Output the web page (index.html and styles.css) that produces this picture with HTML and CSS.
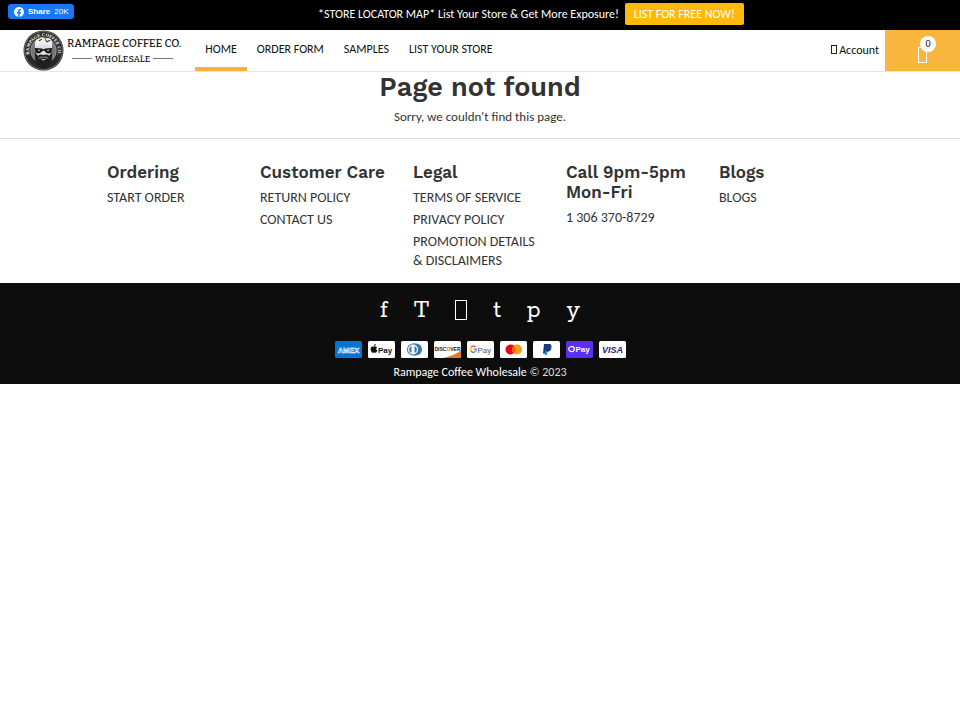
FILE: index.html
```html
<!DOCTYPE html>
<html lang="en">
<head>
    <meta charset="UTF-8">
    <meta name="viewport" content="width=device-width, initial-scale=1.0">
    <title>Page not found - Rampage Coffee Wholesale</title>
    <link rel="stylesheet" href="styles.css">
</head>
<body>

<div class="topbar">
    <button type="button" class="share">
        <svg width="10" height="10" viewBox="0 0 20 20" aria-hidden="true"><circle cx="10" cy="10" r="10" fill="#fff"/><path d="M8.4 20v-7H6v-3h2.4V7.8c0-2.6 1.5-4 3.8-4 1 0 2 .2 2 .2v2.5H13c-1.200 0-1.600.8-1.600 1.600V10h2.700l-.5 3h-2.200v7z" fill="#1877f2"/></svg>
        <b>Share</b> <span>20K</span>
    </button>
    <p class="promo">*STORE LOCATOR MAP* List Your Store &amp; Get More Exposure!
        <a href="#" class="promo-btn">LIST FOR FREE NOW!</a></p>
</div>

<header class="header">
    <a href="#" class="logo">
        <svg class="badge" viewBox="0 0 80 80" aria-hidden="true">
            <defs><path id="ring" d="M20 60A28 28 0 1 1 60 60"/></defs>
            <circle cx="40" cy="40" r="39" fill="#292929"/>
            <circle cx="40" cy="40" r="37" fill="none" stroke="#aaa" stroke-width="1"/>
            <circle cx="40" cy="40" r="25" fill="#777" stroke="#bbb" stroke-width="1"/>
            <text class="ring-text"><textPath href="#ring" startOffset="50%">RAMPAGE COFFEE CO.</textPath></text>
            <path d="M24 36Q21 18 30 17Q37 11 43 17Q54 12 57 24L56 40Q54 34 49 31L30 31Z" fill="#eee"/>
            <path d="M26 31Q40 26 55 31L54 54L47 63L40 67L32 63L25 53Z" fill="#ddd"/>
            <path d="M23 35L37 36L40 38L43 36L57 35L55 44Q48 49 43 42L40 40L37 42Q31 49 25 44Z" fill="#171717"/>
            <path d="M28 39L34 38L31 42ZM46 39L52 38L49 42Z" fill="#bbb"/>
            <path d="M23 43L29 50Q34 46 40 49Q46 46 51 50L57 43L56 60Q51 75 40 76Q29 75 24 60Z" fill="#202020"/>
            <path d="M29 55Q35 49 40 52Q46 49 51 55Q46 57 40 54Q34 57 29 55Z" fill="#666"/>
            <path d="M35 57H45L42 59H38Z" fill="#ddd"/>
            <path d="M31 21L37 18M43 18L47 23L53 20" fill="none" stroke="#333" stroke-width="2"/>
        </svg>
        <span class="brand">
            <span class="brand-name">RAMPAGE COFFEE CO.</span>
            <span class="brand-sub">WHOLESALE</span>
        </span>
    </a>
    <nav class="nav">
        <a href="#" class="active">HOME</a>
        <a href="#">ORDER FORM</a>
        <a href="#">SAMPLES</a>
        <a href="#">LIST YOUR STORE</a>
    </nav>
    <a href="#" class="account"><span class="user-icon"></span>Account</a>
    <a href="#" class="cart" aria-label="Cart"><span class="bag"><span class="count">0</span></span></a>
</header>

<main class="notfound">
    <h1>Page not found</h1>
    <p>Sorry, we couldn't find this page.</p>
</main>

<footer>
    <div class="links">
        <div>
            <h2>Ordering</h2>
            <ul><li><a href="#">START ORDER</a></li></ul>
        </div>
        <div>
            <h2>Customer Care</h2>
            <ul>
                <li><a href="#">RETURN POLICY</a></li>
                <li><a href="#">CONTACT US</a></li>
            </ul>
        </div>
        <div>
            <h2>Legal</h2>
            <ul>
                <li><a href="#">TERMS OF SERVICE</a></li>
                <li><a href="#">PRIVACY POLICY</a></li>
                <li><a href="#">PROMOTION DETAILS &amp; DISCLAIMERS</a></li>
            </ul>
        </div>
        <div>
            <h2>Call 9pm-5pm Mon-Fri</h2>
            <ul><li><a href="#">1 306 370-8729</a></li></ul>
        </div>
        <div>
            <h2>Blogs</h2>
            <ul><li><a href="#">BLOGS</a></li></ul>
        </div>
    </div>

    <div class="bottom">
        <div class="social">
            <a href="#">f</a>
            <a href="#">T</a>
            <a href="#" aria-label="Instagram"><span class="box"></span></a>
            <a href="#">t</a>
            <a href="#">p</a>
            <a href="#">y</a>
        </div>
        <div class="cards">
            <svg viewBox="0 0 54 34"><rect width="54" height="34" rx="3" fill="#0874d1"/><text x="27" y="23" class="amex">AMEX</text></svg>
            <svg viewBox="0 0 54 34"><rect width="54" height="34" rx="3" fill="#fff"/><path d="M15 11c1.300 0 2.500.5 3.200 1.500-2.700 1.800-2.200 5.300.6 6.500-.8 2.300-2.200 4.500-3.800 4.500-1 0-1.500-.6-2.600-.6s-1.700.6-2.600.6c-2.800 0-6.200-8-3.600-11.200 2-2.300 4-.9 5.300-.9 1 0 1.800-.4 3.500-.4zM12 10.500c-.1-2.200 1.500-4.200 3.600-4.500.3 2.300-1.500 4.400-3.600 4.500z" fill="#111"/><text x="20" y="23" class="pay">Pay</text></svg>
            <svg viewBox="0 0 54 34"><rect width="54" height="34" rx="3" fill="#fff"/><path d="M24 5h6a12 12 0 0 1 0 24h-6z" fill="#3878ad"/><circle cx="24" cy="17" r="12" fill="#3878ad"/><circle cx="24" cy="17" r="10" fill="#fff"/><path d="M21 10a7.500 7.500 0 0 0 0 14zM27 10a7.500 7.500 0 0 1 0 14z" fill="#3878ad"/></svg>
            <svg viewBox="0 0 54 34"><rect width="54" height="34" rx="3" fill="#fff"/><path d="M54 19v12q0 3-3 3H19Q40 29 54 19z" fill="#e57b24"/><text x="27" y="19" class="disc">DISC<tspan fill="#e57b24">O</tspan>VER</text></svg>
            <svg viewBox="0 0 54 34"><rect width="54" height="34" rx="3" fill="#fff"/><g fill="none" stroke-width="2.500"><path d="M8 13a6 6 0 0 1 9-1" stroke="#ea4335"/><path d="M8 13q-1.500 3.500 0 7" stroke="#fbbc04"/><path d="M8 20q4 5 9 1" stroke="#34a853"/><path d="M17 21q2-2 1.500-5H13" stroke="#4285f4"/></g><text x="21" y="23" class="gpay">Pay</text></svg>
            <svg viewBox="0 0 54 34"><rect width="54" height="34" rx="3" fill="#fff"/><circle cx="21" cy="17" r="10" fill="#eb001b"/><circle cx="34" cy="17" r="10" fill="#f79e1b"/><path d="M27.500 9.400a10 10 0 0 1 0 15.200a10 10 0 0 1 0-15.200" fill="#ff5f00"/></svg>
            <svg viewBox="0 0 54 34"><rect width="54" height="34" rx="3" fill="#fff"/><path d="M22 6h10c5 0 6 4 4 8-2 4-5 5-9 5l-1 6h-6z" fill="#173b80"/><path d="M36 11c2 2 1 5 0 7-2 3-4 3-7 3l-1 7h-5l2-9c6 0 10-2 11-8z" fill="#239bd7"/><path d="M26 18c5 0 8-1 10-5l-1 4c-2 4-5 4-8 4z" fill="#222d65"/></svg>
            <svg viewBox="0 0 54 34"><rect width="54" height="34" rx="3" fill="#5a31f4"/><path d="M8 11h4c6 0 6 10 0 10S4 17 7 12" fill="none" stroke="#fff" stroke-width="2.500"/><text x="19" y="22" class="pay shop">Pay</text></svg>
            <svg viewBox="0 0 54 34"><rect width="54" height="34" rx="3" fill="#fff"/><text x="27" y="24" class="visa">VISA</text></svg>
        </div>
        <p class="copy"><a href="#">Rampage Coffee Wholesale</a> © 2023</p>
    </div>
</footer>

</body>
</html>
```
FILE: styles.css
```css
*{
    box-sizing: border-box;
}
body{
    margin: 0;
    font-family: Carlito, Lato, sans-serif;
    font-size: 12px;
    color: #333;
    background-color: #fff;
}
a{
    color: inherit;
    text-decoration: none;
}
h1, h2{
    font-family: "Work Sans", Inter, sans-serif;
    font-weight: 600;
    margin: 0;
}
p{
    margin: 0;
}
.topbar{
    position: relative;
    display: flex;
    justify-content: center;
    height: 30px;
    padding: 3px 0 0 102px;
    background-color: #000;
    color: #fff;
}
.share{
    position: absolute;
    top: 4px;
    left: 8px;
    display: flex;
    align-items: center;
    gap: 4px;
    height: 15px;
    padding: 0 6px;
    border: 0;
    border-radius: 3px;
    background-color: #1877f2;
    color: #fff;
    font-family: "Liberation Sans", Arial, sans-serif;
    font-size: 8px;
}
.promo{
    line-height: 22px;
}
.promo-btn{
    display: inline-block;
    margin-left: 3px;
    padding: 0 9px;
    border-radius: 2px;
    background-color: #ffb90a;
}
.header{
    display: flex;
    height: 42px;
    padding-left: 23px;
    border-bottom: 1px solid #e6e6e6;
    color: #111;
}
.logo{
    display: flex;
    align-items: center;
    gap: 3px;
    margin-right: 14px;
}
.badge{
    width: 41px;
    height: 41px;
}
.ring-text{
    font: bold 9px "Liberation Serif", serif;
    fill: #fff;
    text-anchor: middle;
}
.brand{
    display: flex;
    flex-direction: column;
    gap: 2px;
    font-family: Bitter, "Roboto Slab", "DejaVu Serif Condensed", "DejaVu Serif", serif;
    font-weight: 500;
    white-space: nowrap;
}
.brand-name{
    font-size: 11px;
    line-height: 14px;
}
.brand-sub{
    display: flex;
    align-items: center;
    gap: 3px;
    padding: 0 8px 0 5px;
    font-size: 9px;
    line-height: 12px;
}
.brand-sub::before,
.brand-sub::after{
    content: "";
    flex: 1;
    border-top: 1px solid #777;
}
.nav{
    display: flex;
}
.nav a{
    padding: 0 10px;
    border-bottom: 4px solid transparent;
    line-height: 38px;
}
.nav .active{
    border-color: #f5b23c;
}
.account{
    display: flex;
    align-items: center;
    gap: 2px;
    margin-left: auto;
    padding: 0 6px 2px 0;
}
.user-icon{
    width: 6px;
    height: 9px;
    border: 1px solid #222;
}
.cart{
    display: flex;
    align-items: center;
    justify-content: center;
    width: 75px;
    background-color: #f9b63e;
}
.bag{
    position: relative;
    width: 9px;
    height: 16px;
    margin-top: 9px;
    border: 1px solid #fff;
}
.count{
    position: absolute;
    top: -12px;
    left: 1px;
    width: 16px;
    height: 16px;
    border-radius: 50%;
    background-color: #fff;
    font-size: 10px;
    line-height: 16px;
    text-align: center;
}
.notfound{
    padding-bottom: 12px;
    border-bottom: 1px solid #ddd;
    text-align: center;
}
.notfound h1{
    font-size: 27px;
    line-height: 30px;
}
.notfound p{
    margin-top: 6px;
    font-size: 13px;
    line-height: 18px;
}
.links{
    display: grid;
    grid-template-columns: repeat(5, 1fr);
    padding: 23px 88px 10px 107px;
    font-size: 14px;
}
.links > div{
    padding-right: 22px;
}
.links h2{
    font-size: 17px;
    line-height: 20px;
}
.links ul{
    list-style: none;
    margin: 6px 0 0;
    padding: 0;
}
.links li{
    margin-bottom: 3px;
    line-height: 19px;
}
.bottom{
    display: flex;
    flex-direction: column;
    align-items: center;
    padding: 9px 0 2px;
    background-color: #0d0d0d;
    color: #ddd;
}
.social{
    display: flex;
    align-items: center;
    gap: 26px;
    height: 36px;
    color: #fff;
    font-family: Rokkitt, "DejaVu Serif", serif;
    font-size: 26px;
}
.box{
    display: block;
    width: 12px;
    height: 20px;
    border: 1px solid #fff;
}
.cards{
    display: flex;
    gap: 6px;
    margin-top: 13px;
}
.cards svg{
    width: 27px;
    height: 17px;
}
.cards text{
    font-family: "Liberation Sans", Arial, sans-serif;
    font-weight: bold;
}
.amex{
    font-size: 15px;
    fill: none;
    stroke: #fff;
    text-anchor: middle;
}
.pay{
    font-size: 16px;
    fill: #111;
}
.shop{
    fill: #fff;
}
.disc{
    font-size: 10px;
    fill: #222;
    text-anchor: middle;
}
.cards .gpay{
    font-size: 16px;
    font-weight: normal;
    fill: #555;
}
.visa{
    font-size: 18px;
    font-style: italic;
    fill: #1a2a6c;
    text-anchor: middle;
}
.copy{
    margin-top: 4px;
    line-height: 20px;
}
.copy a{
    color: #fff;
}
```
